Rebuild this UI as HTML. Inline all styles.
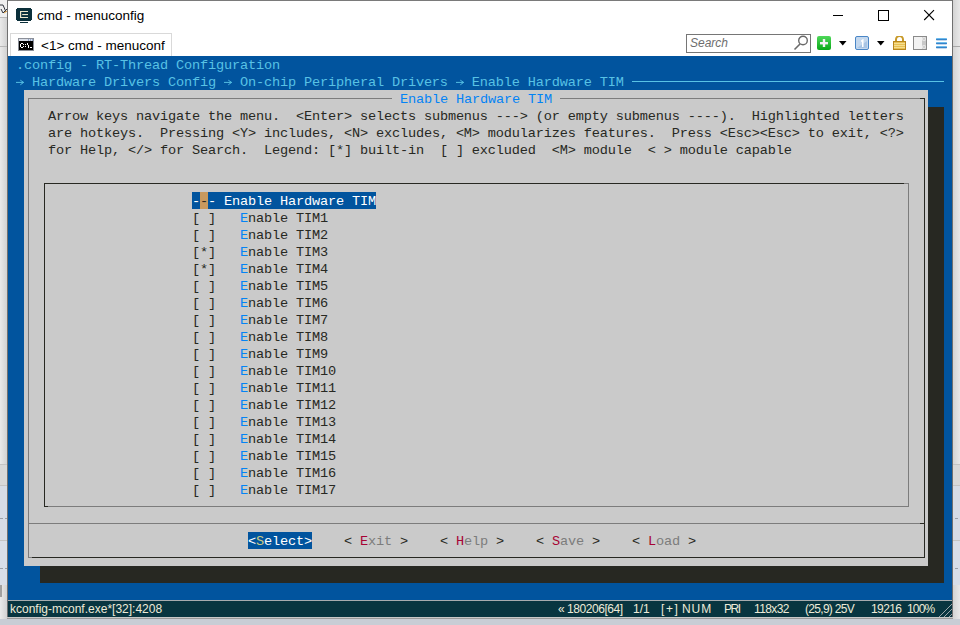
<!DOCTYPE html>
<html><head><meta charset="utf-8">
<style>
html,body{margin:0;padding:0;width:960px;height:625px;overflow:hidden;background:#DCDCDC;}
.r{position:absolute;}
.t{position:absolute;height:17px;line-height:17px;font-family:"Liberation Mono",monospace;font-size:13.6px;letter-spacing:-0.16px;white-space:pre;}
.s{position:absolute;font-family:"Liberation Sans",sans-serif;white-space:pre;}
svg{position:absolute;}
.st{top:601px;font-size:12px;line-height:16px;color:#EDEBD8;}
</style></head><body>
<div class="r" style="left:0;top:0;width:960px;height:625px;background:#DCDCDC;"></div>
<div class="r" style="left:0;top:0;width:7px;height:625px;background:linear-gradient(90deg,#EAEAEA,#D2D2D2);"></div>
<div class="r" style="left:0;top:0;width:7px;height:17px;background:#EFEFEF;"></div>
<div class="r" style="left:0;top:17px;width:7px;height:1px;background:#B8B8B8;"></div>
<div class="r" style="left:0;top:46px;width:7px;height:1px;background:#B8B8B8;"></div>
<svg style="left:0;top:3px" width="7" height="12" viewBox="0 0 7 12"><path d="M0 2L3 2L6 9M1 6L3 10L7 6" fill="none" stroke="#30343C" stroke-width="1"/><path d="M4 10L7 8" stroke="#E0A040" stroke-width="1"/></svg>
<div class="r" style="left:953px;top:0;width:7px;height:625px;background:linear-gradient(90deg,#D4D4D4,#E8E8E8);"></div>
<div class="r" style="left:953px;top:46px;width:7px;height:1px;background:#A8A8A8;"></div>
<div class="r" style="left:0;top:464px;width:960px;height:1px;background:#C4C4C4;"></div>
<div class="r" style="left:0;top:465px;width:960px;height:20px;background:#D8D8D8;"></div>
<div class="r" style="left:0;top:485px;width:960px;height:1px;background:#C4C4C4;"></div>
<div class="r" style="left:0;top:486px;width:960px;height:54px;background:#D6DCE6;"></div>
<div class="r" style="left:0;top:518px;width:960px;height:1px;background:repeating-linear-gradient(90deg,#9AA0A8 0 3px,transparent 3px 5px);"></div>
<div class="r" style="left:0;top:540px;width:960px;height:1px;background:#C4C4C4;"></div>
<div class="r" style="left:0;top:541px;width:960px;height:44px;background:#D8DEE8;"></div>
<div class="r" style="left:0;top:568px;width:960px;height:1px;background:repeating-linear-gradient(90deg,#9AA0A8 0 3px,transparent 3px 5px);"></div>
<div class="r" style="left:0;top:585px;width:2px;height:12px;background:#A0A0A0;"></div>
<div class="r" style="left:0;top:619px;width:960px;height:6px;background:#C8CDD5;"></div>
<div class="r" style="left:7px;top:0;width:946px;height:619px;background:#FFFFFF;"></div>
<div class="r" style="left:7px;top:0;width:946px;height:1px;background:#7A7A7A;"></div>
<div class="r" style="left:7px;top:0;width:1px;height:618px;background:#707070;"></div>
<div class="r" style="left:952px;top:0;width:1px;height:618px;background:#707070;"></div>
<div class="r" style="left:7px;top:617px;width:946px;height:1px;background:#C8C8C8;"></div>
<div class="r" style="left:7px;top:618px;width:946px;height:1px;background:#9A9A9A;"></div>
<!-- conemu icon -->
<svg style="left:16px;top:8px" width="16" height="16" viewBox="0 0 16 16">
<path d="M1 0H15V1H16V12H15V13H1V12H0V1H1Z" fill="#0B2F3A"/>
<path d="M4 3H12V4.1H5.2V8.9H12V10H4Z" fill="#EEE6CC"/>
<rect x="6.2" y="6" width="5.8" height="1.1" fill="#EEE6CC"/>
<rect x="4" y="14" width="8" height="1" fill="#0B2F3A"/>
</svg>
<div class="s" style="left:37px;top:7px;font-size:13.5px;line-height:17px;color:#000;">cmd - menuconfig</div>
<!-- window controls -->
<div class="r" style="left:833px;top:15px;width:10px;height:1px;background:#000;"></div>
<div class="r" style="left:878px;top:10px;width:11px;height:11px;border:1px solid #000;box-sizing:border-box;"></div>
<svg style="left:923px;top:9px" width="13" height="13" viewBox="0 0 13 13"><path d="M1.2 1.2L11 11M11 1.2L1.2 11" stroke="#000" stroke-width="1.1"/></svg>
<!-- tab -->
<div class="r" style="left:10px;top:33px;width:162px;height:23px;background:#fff;border:1px solid #D9D9D9;border-bottom:none;box-sizing:border-box;"></div>
<svg style="left:18px;top:38px" width="16" height="13" viewBox="0 0 16 13">
<rect x="0" y="0" width="16" height="13" fill="#8C9099"/>
<rect x="1" y="1" width="14" height="2" fill="#D9DEE8"/>
<rect x="10" y="1.5" width="1" height="1" fill="#4B6CA8"/><rect x="12" y="1.5" width="1" height="1" fill="#4B6CA8"/><rect x="14" y="1.5" width="1" height="1" fill="#4B6CA8"/>
<rect x="1" y="3" width="14" height="9" fill="#000"/>
<path d="M2 6h1v3H2zM3 5h2v1H3zM3 9h2v1H3zM5 6h1v1H5zM5 8h1v1H5zM7 6h1v1H7zM7 8h1v1H7zM9 5h1v2H9zM10 7h1v3h-1zM12 9h2v1h-2z" fill="#fff"/>
</svg>
<div class="s" style="left:41px;top:37px;font-size:13.5px;line-height:17px;color:#000;">&lt;1&gt; cmd - menuconf</div>
<!-- search -->
<div class="r" style="left:686px;top:34px;width:125px;height:19px;border:1px solid #767676;box-sizing:border-box;background:#fff;"></div>
<div class="s" style="left:690px;top:36px;font-size:12px;line-height:15px;color:#6D6D6D;font-style:italic;">Search</div>
<svg style="left:792px;top:34px" width="18" height="18" viewBox="0 0 18 18"><circle cx="11" cy="6.5" r="4.3" fill="none" stroke="#6A6A6A" stroke-width="1.4"/><path d="M2.5 15.5L8 10" stroke="#6A6A6A" stroke-width="1.6"/></svg>
<!-- toolbar icons -->
<svg style="left:817px;top:36px" width="14" height="14" viewBox="0 0 14 14">
<defs><linearGradient id="gg" x1="0" y1="0" x2="0" y2="1"><stop offset="0" stop-color="#4FD85A"/><stop offset="1" stop-color="#0AA818"/></linearGradient></defs>
<rect x="0" y="0" width="14" height="14" rx="2" fill="url(#gg)"/>
<rect x="3" y="6" width="8" height="2.4" fill="#F4F0F4"/><rect x="5.8" y="3" width="2.4" height="8" fill="#F4F0F4"/>
</svg>
<svg style="left:839px;top:41px" width="8" height="5" viewBox="0 0 8 5"><path d="M0 0H7.5L3.75 4.5Z" fill="#000"/></svg>
<svg style="left:855px;top:36px" width="14" height="14" viewBox="0 0 14 14">
<rect x="0.5" y="0.5" width="13" height="13" rx="1.5" fill="#C4D8EE" stroke="#4A86C6"/>
<path d="M2 12L12 5V12Z" fill="#A8C4E4"/>
<path d="M6 4.5L8 3H8.5V11H7V5.5L6 6Z" fill="#FFF"/>
</svg>
<svg style="left:877px;top:41px" width="8" height="5" viewBox="0 0 8 5"><path d="M0 0H7.5L3.75 4.5Z" fill="#000"/></svg>
<svg style="left:893px;top:36px" width="13" height="14" viewBox="0 0 13 14">
<path d="M3 6V3.5A3.5 3.5 0 0 1 10 3.5V6" fill="none" stroke="#C89A2A" stroke-width="2"/>
<rect x="0.5" y="5.5" width="12" height="8" fill="#E8C054" stroke="#B8861E"/>
<path d="M1 7.5h11M1 9.5h11M1 11.5h11" stroke="#F8E6A0" stroke-width="0.8"/>
</svg>
<svg style="left:913px;top:36px" width="14" height="14" viewBox="0 0 14 14">
<rect x="0.5" y="0.5" width="13" height="13" fill="#F2F2F2" stroke="#8A8A8A"/>
<rect x="9" y="1" width="4" height="12" fill="#C8C8C8"/>
<rect x="9.5" y="1.5" width="3" height="3" fill="#FFF"/><rect x="9.5" y="9.5" width="3" height="3" fill="#FFF"/>
<rect x="10.5" y="2.5" width="1" height="1" fill="#444"/><rect x="10.5" y="10.5" width="1" height="1" fill="#444"/>
</svg>
<svg style="left:935px;top:36px" width="12" height="13" viewBox="0 0 12 13">
<defs><linearGradient id="hb" x1="0" y1="0" x2="0" y2="1"><stop offset="0" stop-color="#8AD8FF"/><stop offset="1" stop-color="#0E5CB0"/></linearGradient></defs>
<rect x="1" y="2" width="11" height="2.2" rx="0.6" fill="url(#hb)"/><rect x="1" y="6" width="11" height="2.2" rx="0.6" fill="url(#hb)"/><rect x="1" y="10" width="11" height="2.2" rx="0.6" fill="url(#hb)"/>
</svg>
<div class="r" style="left:8px;top:56px;width:944px;height:544px;background:#01549E;"></div>
<div class="t" style="left:16px;top:57px"><span style="color:#58C2E5;">.config - RT-Thread Configuration</span></div>
<div class="t" style="left:16px;top:74px"><span style="color:#58C2E5;">  Hardware Drivers Config   On-chip Peripheral Drivers   Enable Hardware TIM </span></div>
<svg style="left:16px;top:73px" width="8" height="17" viewBox="0 0 8 17"><path d="M0 9.4H7.6M4.3 7.2L7.6 9.4L4.3 11.8" fill="none" stroke="#58C2E5" stroke-width="0.95"/></svg>
<svg style="left:224px;top:73px" width="8" height="17" viewBox="0 0 8 17"><path d="M0 9.4H7.6M4.3 7.2L7.6 9.4L4.3 11.8" fill="none" stroke="#58C2E5" stroke-width="0.95"/></svg>
<svg style="left:456px;top:73px" width="8" height="17" viewBox="0 0 8 17"><path d="M0 9.4H7.6M4.3 7.2L7.6 9.4L4.3 11.8" fill="none" stroke="#58C2E5" stroke-width="0.95"/></svg>
<div class="r" style="left:632px;top:81px;width:312px;height:1px;background:#58C2E5;"></div>
<div class="r" style="left:928px;top:107px;width:16px;height:476px;background:#272822;"></div>
<div class="r" style="left:40px;top:566px;width:904px;height:17px;background:#272822;"></div>
<div class="r" style="left:24px;top:90px;width:904px;height:476px;background:#CACACA;"></div>
<div class="r" style="left:28px;top:98px;width:364px;height:1px;background:#7C7C7C;"></div>
<div class="r" style="left:560px;top:98px;width:360px;height:1px;background:#7C7C7C;"></div>
<div class="r" style="left:920px;top:98px;width:5px;height:1px;background:#272822;"></div>
<div class="r" style="left:28px;top:98px;width:1px;height:460px;background:#7C7C7C;"></div>
<div class="r" style="left:28px;top:557px;width:4px;height:1px;background:#7C7C7C;"></div>
<div class="r" style="left:32px;top:557px;width:893px;height:1px;background:#272822;"></div>
<div class="r" style="left:924px;top:98px;width:1px;height:460px;background:#272822;"></div>
<div class="r" style="left:28px;top:523px;width:892px;height:1px;background:#7C7C7C;"></div>
<div class="r" style="left:920px;top:523px;width:4px;height:1px;background:#272822;"></div>
<div class="t" style="left:392px;top:91px"><span style="color:#0383F5;"> Enable Hardware TIM </span></div>
<div class="t" style="left:48px;top:108px"><span style="color:#272822;">Arrow keys navigate the menu.  &lt;Enter&gt; selects submenus ---&gt; (or empty submenus ----).  Highlighted letters</span></div>
<div class="t" style="left:48px;top:125px"><span style="color:#272822;">are hotkeys.  Pressing &lt;Y&gt; includes, &lt;N&gt; excludes, &lt;M&gt; modularizes features.  Press &lt;Esc&gt;&lt;Esc&gt; to exit, &lt;?&gt;</span></div>
<div class="t" style="left:48px;top:142px"><span style="color:#272822;">for Help, &lt;/&gt; for Search.  Legend: [*] built-in  [ ] excluded  &lt;M&gt; module  &lt; &gt; module capable</span></div>
<div class="r" style="left:44px;top:183px;width:860px;height:1px;background:#272822;"></div>
<div class="r" style="left:904px;top:183px;width:5px;height:1px;background:#7C7C7C;"></div>
<div class="r" style="left:908px;top:183px;width:1px;height:324px;background:#7C7C7C;"></div>
<div class="r" style="left:44px;top:183px;width:1px;height:324px;background:#272822;"></div>
<div class="r" style="left:44px;top:506px;width:4px;height:1px;background:#272822;"></div>
<div class="r" style="left:48px;top:506px;width:861px;height:1px;background:#7C7C7C;"></div>
<div class="r" style="left:192px;top:192px;width:8px;height:17px;background:#01549E;"></div>
<div class="r" style="left:200px;top:192px;width:8px;height:17px;background:#C8995E;"></div>
<div class="r" style="left:208px;top:192px;width:168px;height:17px;background:#01549E;"></div>
<div class="t" style="left:192px;top:193px"><span style="color:#FFFFFF;">-</span><span style="color:#272822;">-</span><span style="color:#FFFFFF;">- Enable Hardware TIM</span></div>
<div class="t" style="left:192px;top:210px"><span style="color:#272822;">[ ]   </span><span style="color:#0383F5;">E</span><span style="color:#272822;">nable TIM1</span></div>
<div class="t" style="left:192px;top:227px"><span style="color:#272822;">[ ]   </span><span style="color:#0383F5;">E</span><span style="color:#272822;">nable TIM2</span></div>
<div class="t" style="left:192px;top:244px"><span style="color:#272822;">[*]   </span><span style="color:#0383F5;">E</span><span style="color:#272822;">nable TIM3</span></div>
<div class="t" style="left:192px;top:261px"><span style="color:#272822;">[*]   </span><span style="color:#0383F5;">E</span><span style="color:#272822;">nable TIM4</span></div>
<div class="t" style="left:192px;top:278px"><span style="color:#272822;">[ ]   </span><span style="color:#0383F5;">E</span><span style="color:#272822;">nable TIM5</span></div>
<div class="t" style="left:192px;top:295px"><span style="color:#272822;">[ ]   </span><span style="color:#0383F5;">E</span><span style="color:#272822;">nable TIM6</span></div>
<div class="t" style="left:192px;top:312px"><span style="color:#272822;">[ ]   </span><span style="color:#0383F5;">E</span><span style="color:#272822;">nable TIM7</span></div>
<div class="t" style="left:192px;top:329px"><span style="color:#272822;">[ ]   </span><span style="color:#0383F5;">E</span><span style="color:#272822;">nable TIM8</span></div>
<div class="t" style="left:192px;top:346px"><span style="color:#272822;">[ ]   </span><span style="color:#0383F5;">E</span><span style="color:#272822;">nable TIM9</span></div>
<div class="t" style="left:192px;top:363px"><span style="color:#272822;">[ ]   </span><span style="color:#0383F5;">E</span><span style="color:#272822;">nable TIM10</span></div>
<div class="t" style="left:192px;top:380px"><span style="color:#272822;">[ ]   </span><span style="color:#0383F5;">E</span><span style="color:#272822;">nable TIM11</span></div>
<div class="t" style="left:192px;top:397px"><span style="color:#272822;">[ ]   </span><span style="color:#0383F5;">E</span><span style="color:#272822;">nable TIM12</span></div>
<div class="t" style="left:192px;top:414px"><span style="color:#272822;">[ ]   </span><span style="color:#0383F5;">E</span><span style="color:#272822;">nable TIM13</span></div>
<div class="t" style="left:192px;top:431px"><span style="color:#272822;">[ ]   </span><span style="color:#0383F5;">E</span><span style="color:#272822;">nable TIM14</span></div>
<div class="t" style="left:192px;top:448px"><span style="color:#272822;">[ ]   </span><span style="color:#0383F5;">E</span><span style="color:#272822;">nable TIM15</span></div>
<div class="t" style="left:192px;top:465px"><span style="color:#272822;">[ ]   </span><span style="color:#0383F5;">E</span><span style="color:#272822;">nable TIM16</span></div>
<div class="t" style="left:192px;top:482px"><span style="color:#272822;">[ ]   </span><span style="color:#0383F5;">E</span><span style="color:#272822;">nable TIM17</span></div>
<div class="r" style="left:248px;top:532px;width:8px;height:17px;background:#01549E;"></div>
<div class="r" style="left:256px;top:532px;width:8px;height:17px;background:#01549E;"></div>
<div class="r" style="left:264px;top:532px;width:40px;height:17px;background:#01549E;"></div>
<div class="r" style="left:304px;top:532px;width:8px;height:17px;background:#01549E;"></div>
<div class="t" style="left:248px;top:533px"><span style="color:#FFFFFF;">&lt;</span><span style="color:#CCCC81;">S</span><span style="color:#FFFFFF;">elect</span><span style="color:#FFFFFF;">&gt;</span></div>
<div class="t" style="left:344px;top:533px"><span style="color:#272822;">&lt; </span><span style="color:#A70334;">E</span><span style="color:#7C7C7C;">xit </span><span style="color:#272822;">&gt;</span></div>
<div class="t" style="left:440px;top:533px"><span style="color:#272822;">&lt; </span><span style="color:#A70334;">H</span><span style="color:#7C7C7C;">elp </span><span style="color:#272822;">&gt;</span></div>
<div class="t" style="left:536px;top:533px"><span style="color:#272822;">&lt; </span><span style="color:#A70334;">S</span><span style="color:#7C7C7C;">ave </span><span style="color:#272822;">&gt;</span></div>
<div class="t" style="left:632px;top:533px"><span style="color:#272822;">&lt; </span><span style="color:#A70334;">L</span><span style="color:#7C7C7C;">oad </span><span style="color:#272822;">&gt;</span></div>
<!-- status bar -->
<div class="r" style="left:8px;top:600px;width:944px;height:1px;background:#A8ACAE;"></div>
<div class="r" style="left:8px;top:601px;width:944px;height:16px;background:#083540;"></div>
<div class="s" style="left:10px;top:601px;font-size:12px;line-height:16px;color:#EDEBD8;">kconfig-mconf.exe*[32]:4208</div>
<div class="s st" style="left:558px;letter-spacing:-0.45px;">« 180206[64]</div>
<div class="s st" style="left:633px;">1/1</div>
<div class="s st" style="left:661px;letter-spacing:1.6px;">[+]</div>
<div class="s st" style="left:682px;letter-spacing:0.9px;">NUM</div>
<div class="s st" style="left:724px;letter-spacing:-1.5px;">PRI</div>
<div class="s st" style="left:754px;letter-spacing:-0.6px;">118x32</div>
<div class="s st" style="left:805px;letter-spacing:-0.7px;">(25,9) 25V</div>
<div class="s st" style="left:871px;letter-spacing:-0.6px;">19216</div>
<div class="s st" style="left:907px;letter-spacing:-0.8px;">100%</div>
<svg style="left:936px;top:601px" width="16" height="16" viewBox="0 0 16 16"><path d="M16 3L3 16M16 8L8 16M16 13L13 16" stroke="#9AA6AA" stroke-width="1"/></svg>
</body></html>
